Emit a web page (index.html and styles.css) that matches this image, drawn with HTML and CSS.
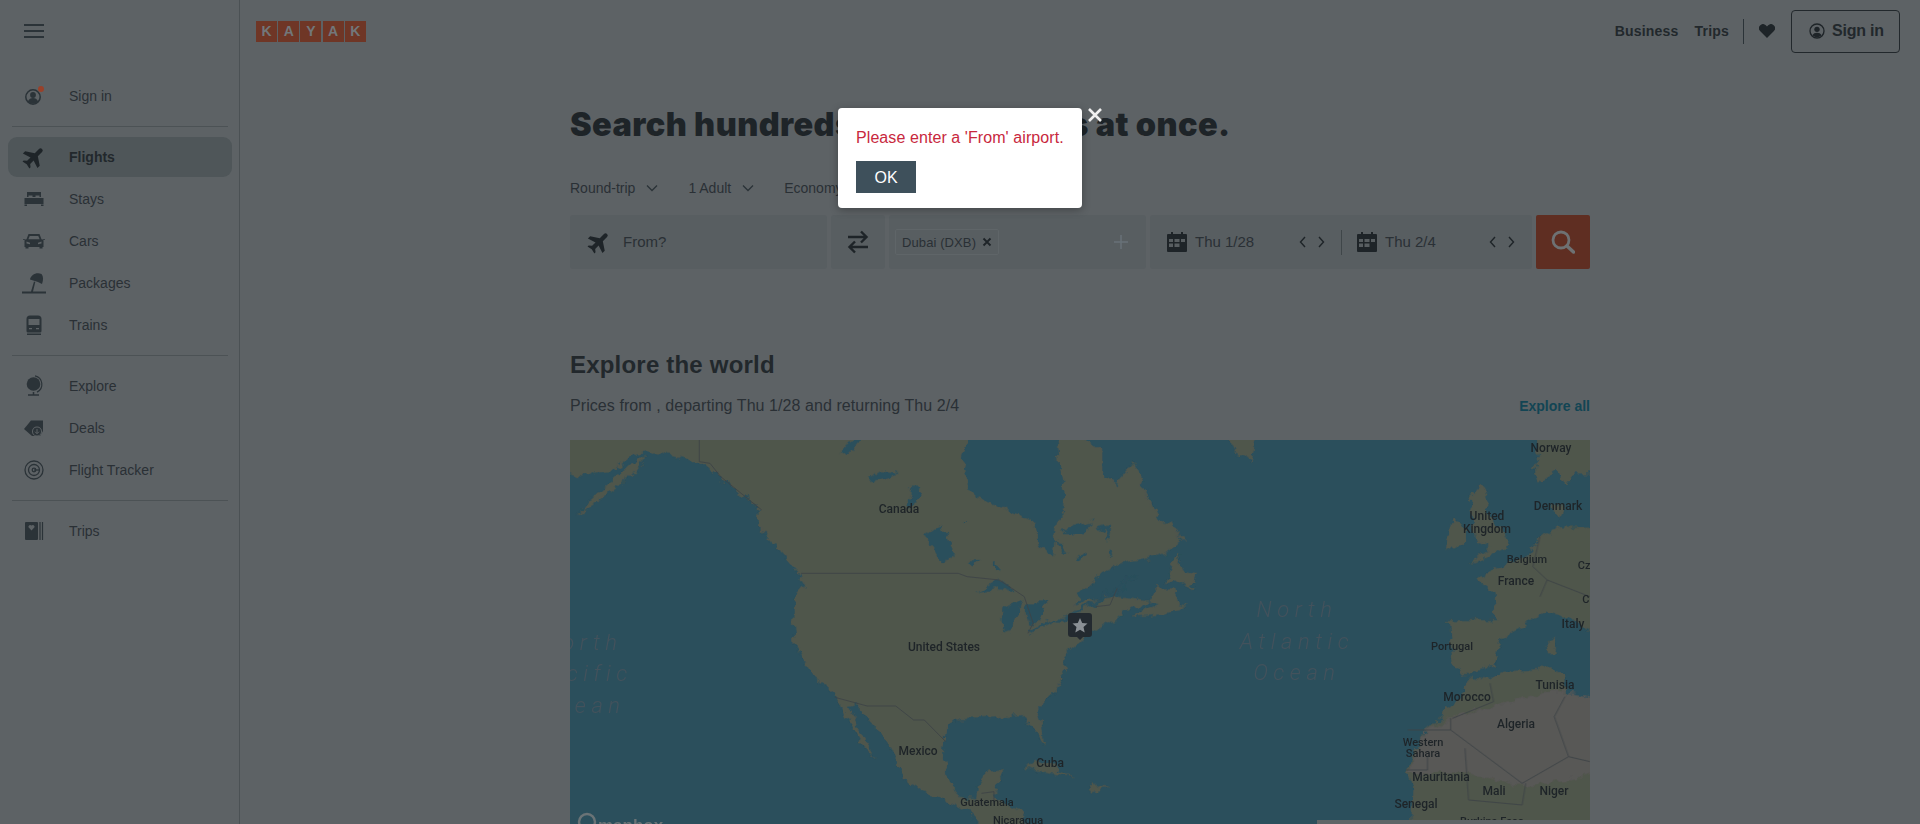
FILE: index.html
```html
<!DOCTYPE html>
<html lang="en">
<head>
    <meta charset="UTF-8">
    <meta name="viewport" content="width=device-width, initial-scale=1.0">
    <title>KAYAK - Search Flights</title>
    <link rel="stylesheet" href="styles.css">
</head>
<body>
    <aside class="sidebar">
        <div class="burger"><span></span><span></span><span></span></div>
        <nav class="side-nav">
            <a class="side-item">
                <span class="side-icon">
                    <svg class="icon-user" viewBox="0 0 24 24" width="24" height="24"><circle cx="11" cy="13" r="7.200" fill="none" stroke="#2b3338" stroke-width="1.500"/><circle cx="11" cy="11" r="2.900" fill="#2b3338"/><path d="M5.800 17.500c1-2.500 3-3.500 5.200-3.500s4.200 1 5.200 3.500c-1.400 1.500-3.200 2.300-5.200 2.300s-3.800-.8-5.200-2.300z" fill="#2b3338"/><circle cx="19" cy="5" r="3" fill="#98412a"/></svg>
                </span>
                Sign in
            </a>
            <div class="side-line"></div>
            <a class="side-item active">
                <span class="side-icon">
                    <svg viewBox="0 0 24 24" width="26" height="26"><path transform="rotate(45 12 12)" d="M21.500 17v-3L14 9V3.500a2 2 0 0 0-4 0V9l-7.500 5v3l7.500-2.500V19l-2.500 2v1.500l4.500-1 4.500 1V21L14 19v-4.500z" fill="#1e2428"/></svg>
                </span>
                Flights
            </a>
            <a class="side-item">
                <span class="side-icon">
                    <svg viewBox="0 0 24 24" width="24" height="24"><path d="M5 5h14v5h-1.500V8.500h-4V10h-3V8.500h-4V10H5zM2.500 11h19v6h-19zM2.500 17.500h2.500V19H2.500zM19 17.500h2.500V19H19z" fill="#2b3338"/></svg>
                </span>
                Stays
            </a>
            <a class="side-item">
                <span class="side-icon">
                    <svg viewBox="0 0 24 24" width="24" height="24"><path fill-rule="evenodd" d="M6.500 5h11l2 5.200 2 1V18h-1v1.500h-3V18H6.500v1.500h-3V18h-1v-6.800l2-1zM7.700 7l-1.300 3.300h11.200L16.300 7zM4.500 12.500v2l3.500.8v-1.500zM19.500 12.500l-3.500 1.300v1.500l3.500-.8z" fill="#2b3338"/><path d="M1 10h2.500v.8H1zM20.500 10H23v.8h-2.500z" fill="#2b3338"/></svg>
                </span>
                Cars
            </a>
            <a class="side-item">
                <span class="side-icon">
                    <svg viewBox="0 0 24 24" width="24" height="24"><path d="M0 20.500h24V22.500H0zM9 20.500l3-10 1.300.4-2.300 9.600zM8 8.500C9 4 14 1 19.500 3c2 2.500 2 6 .5 10l-4-2-1.500-.5z" fill="#2b3338"/></svg>
                </span>
                Packages
            </a>
            <a class="side-item">
                <span class="side-icon">
                    <svg viewBox="0 0 24 24" width="24" height="24"><path fill-rule="evenodd" d="M8 2.500h8a3.500 3.500 0 0 1 3.500 3.500v12a1.500 1.500 0 0 1-1.500 1.500H6A1.500 1.500 0 0 1 4.500 18V6A3.500 3.500 0 0 1 8 2.500zM6.500 6v6h11V6zM7 15v1.200h3V15zM14 15v1.200h3V15z" fill="#2b3338"/><path d="M5 20.500h14V22H5z" fill="#2b3338"/></svg>
                </span>
                Trains
            </a>
            <div class="side-line"></div>
            <a class="side-item">
                <span class="side-icon">
                    <svg viewBox="0 0 24 24" width="24" height="24"><circle cx="11.500" cy="10" r="6.800" fill="#2b3338"/><path d="M13 1.800a8.700 8.700 0 0 1 2 16.300" fill="none" stroke="#2b3338" stroke-width="1.200"/><path d="M11.500 18v2.500M6 21h11" fill="none" stroke="#2b3338" stroke-width="1.500"/></svg>
                </span>
                Explore
            </a>
            <a class="side-item">
                <span class="side-icon">
                    <svg viewBox="0 0 24 24" width="24" height="24"><path d="M9 4.500h12V15l-3 5H10l-8-7z" fill="#2b3338"/><circle cx="15" cy="15.500" r="5" fill="#5d6265"/><circle cx="15" cy="15.500" r="4" fill="#2b3338"/><path d="M15 13v4.500M13 15.700l2 2 2-2" fill="none" stroke="#5d6265" stroke-width="1"/></svg>
                </span>
                Deals
            </a>
            <a class="side-item">
                <span class="side-icon">
                    <svg viewBox="0 0 24 24" width="24" height="24" fill="none" stroke="#2b3338" stroke-width="1.300"><circle cx="12" cy="12" r="9"/><circle cx="12" cy="12" r="5.500"/><circle cx="12" cy="12" r="1.800"/><path d="M12 12h5"/></svg>
                </span>
                Flight Tracker
            </a>
            <div class="side-line"></div>
            <a class="side-item">
                <span class="side-icon">
                    <svg viewBox="0 0 24 24" width="24" height="24"><path fill-rule="evenodd" d="M4 3h11a1 1 0 0 1 1 1v16a1 1 0 0 1-1 1H4a1 1 0 0 1-1-1V4a1 1 0 0 1 1-1zM9.500 11.500l3-3.200a1.800 1.800 0 0 0-3-1.800 1.800 1.800 0 0 0-3 1.800z" fill="#2b3338"/><path d="M18 3v18M20.500 3v18" stroke="#2b3338" stroke-width="1.200"/></svg>
                </span>
                Trips
            </a>
        </nav>
    </aside>

    <main class="main">
        <header class="topbar">
            <div class="logo"><span>K</span><span>A</span><span>Y</span><span>A</span><span>K</span></div>
            <div class="top-links">
                <a>Business</a>
                <a class="trips-link">Trips</a>
                <span class="top-line"></span>
                <svg class="heart" viewBox="0 0 16 14" width="16" height="14"><path d="M8 14L1.300 7.300A3.900 3.900 0 0 1 6.800 1.300L8 2.500l1.200-1.200a3.900 3.900 0 0 1 5.500 6z" fill="#1e2428"/></svg>
                <button class="signin-btn">
                    <svg viewBox="0 0 24 24" width="16" height="16"><circle cx="12" cy="12" r="10.500" fill="none" stroke="#1e2428" stroke-width="2"/><circle cx="12" cy="9.500" r="4" fill="#1e2428"/><path d="M5 18.500c1.500-3 4-4 7-4s5.500 1 7 4c-2 2-4.300 3-7 3s-5-1-7-3z" fill="#1e2428"/></svg>
                    Sign in
                </button>
            </div>
        </header>

        <section class="content">
            <h1 class="title">Search hundreds of travel sites at once.</h1>

            <div class="filters">
                <a class="filter">Round-trip <svg viewBox="0 0 12 8" width="12" height="8"><path d="M1 1.500l5 5 5-5" fill="none" stroke="#2b3338" stroke-width="1.300"/></svg></a>
                <a class="filter">1 Adult <svg viewBox="0 0 12 8" width="12" height="8"><path d="M1 1.500l5 5 5-5" fill="none" stroke="#2b3338" stroke-width="1.300"/></svg></a>
                <a class="filter">Economy</a>
            </div>

            <div class="search-row">
                <div class="box origin">
                    <svg viewBox="0 0 24 24" width="26" height="26"><path transform="rotate(45 12 12)" d="M21.500 17v-3L14 9V3.500a2 2 0 0 0-4 0V9l-7.500 5v3l7.500-2.500V19l-2.500 2v1.500l4.500-1 4.500 1V21L14 19v-4.500z" fill="#1e2428"/></svg>
                    <span class="from-text">From?</span>
                </div>
                <div class="box swap">
                    <svg viewBox="0 0 22 24" width="22" height="24"><path d="M1 7h18M14 1.500L19.500 7 14 12.500M21 17H3M8 11.500L2.500 17 8 22.500" fill="none" stroke="#1e2428" stroke-width="2.400"/></svg>
                </div>
                <div class="box dest">
                    <div class="chip">Dubai (DXB) <svg viewBox="0 0 10 10" width="10" height="10"><path d="M1.500 1.500l7 7M8.500 1.500l-7 7" stroke="#1e2428" stroke-width="1.800"/></svg></div>
                    <svg class="plus" viewBox="0 0 14 14" width="14" height="14"><path d="M7 0v14M0 7h14" stroke="#687278" stroke-width="1.500"/></svg>
                </div>
                <div class="box dates">
                    <div class="date">
                        <svg viewBox="0 0 20 20" width="20" height="20"><path fill-rule="evenodd" d="M4 0h2v2h8V0h2v2h3a1 1 0 0 1 1 1v16a1 1 0 0 1-1 1H1a1 1 0 0 1-1-1V3a1 1 0 0 1 1-1h3zM2 7v3h4V7zM7.500 7v3h5V7zM14 7v3h4V7zM2 11.500V15h4v-3.500zM7.500 11.500V15h5v-3.500z" fill="#1e2428"/></svg>
                        <span class="date-text">Thu 1/28</span>
                        <svg class="arrows" viewBox="0 0 26 12" width="26" height="12"><path d="M6 1L1.500 6 6 11M20 1l4.500 5-4.500 5" fill="none" stroke="#1e2428" stroke-width="1.400"/></svg>
                    </div>
                    <span class="date-line"></span>
                    <div class="date">
                        <svg viewBox="0 0 20 20" width="20" height="20"><path fill-rule="evenodd" d="M4 0h2v2h8V0h2v2h3a1 1 0 0 1 1 1v16a1 1 0 0 1-1 1H1a1 1 0 0 1-1-1V3a1 1 0 0 1 1-1h3zM2 7v3h4V7zM7.500 7v3h5V7zM14 7v3h4V7zM2 11.500V15h4v-3.500zM7.500 11.500V15h5v-3.500z" fill="#1e2428"/></svg>
                        <span class="date-text">Thu 2/4</span>
                        <svg class="arrows" viewBox="0 0 26 12" width="26" height="12"><path d="M6 1L1.500 6 6 11M20 1l4.500 5-4.500 5" fill="none" stroke="#1e2428" stroke-width="1.400"/></svg>
                    </div>
                </div>
                <button class="search-btn">
                    <svg viewBox="0 0 24 24" width="24" height="24"><circle cx="10" cy="10" r="8" fill="none" stroke="#6e7173" stroke-width="2.800"/><path d="M16 16l6.500 6" stroke="#6e7173" stroke-width="3.500" stroke-linecap="round"/></svg>
                </button>
            </div>

            <h2 class="explore-title">Explore the world</h2>
            <div class="explore-sub">
                <span>Prices from , departing Thu 1/28 and returning Thu 2/4</span>
                <a class="explore-all">Explore all</a>
            </div>

            <div class="map">
                <svg viewBox="0 0 1020 384" width="1020" height="384">
                    <defs>
                        <filter id="rough" x="-5%" y="-5%" width="110%" height="110%">
                            <feTurbulence type="fractalNoise" baseFrequency=".035" numOctaves="3" seed="4" result="noise"/>
                            <feDisplacementMap in="SourceGraphic" in2="noise" scale="34" xChannelSelector="R" yChannelSelector="G"/>
                        </filter>
                    </defs>
                    <g transform="translate(-10 -100) scale(.35714 .33333)">
                        <g filter="url(#rough)">
                            <!-- north america -->
                            <polygon class="land" points="-20,250 -20,385 60,410 100,395 150,390 205,345 270,335 330,350 390,365 420,390 450,420 490,450 530,480 565,510 560,560 590,600 620,640 670,700 685,740 660,770 655,850 660,920 700,1000 770,1060 800,1130 850,1215 888,1258 850,1190 805,1095 830,1090 870,1140 920,1220 955,1290 965,1320 1040,1360 1100,1395 1150,1420 1210,1490 1300,1490 1300,1420 1260,1400 1215,1375 1225,1330 1250,1290 1200,1295 1170,1340 1165,1375 1115,1370 1085,1310 1075,1230 1085,1160 1120,1135 1210,1130 1300,1125 1325,1170 1355,1210 1350,1160 1335,1110 1390,1050 1420,990 1405,960 1440,920 1500,870 1568,830 1600,800 1640,800 1670,745 1720,745 1730,795 1760,800 1670,825 1590,830 1600,830 1680,790 1560,770 1434,790 1514,700 1574,670 1694,640 1744,600 1714,545 1684,545 1634,440 1604,370 1559,430 1524,410 1524,340 1474,300 1474,250"/>
                            <polygon class="land" points="50,525 100,490 160,440 205,400 240,350 200,370 150,420 85,480"/>
                            <polygon class="land" points="1694,735 1729,640 1744,690 1784,700 1774,735 1759,750 1744,720"/>
                            <polygon class="land" points="1854,250 1959,250 1934,365 1894,340"/>
                            <polygon class="land" points="1295,1280 1340,1260 1400,1290 1445,1310 1395,1300"/>
                            <polygon class="land" points="1480,1330 1540,1340 1490,1352"/>
                            <!-- hudson bay and lakes -->
                            <polygon class="water" points="1150,250 1390,250 1400,380 1420,470 1390,560 1380,640 1340,620 1320,540 1250,510 1160,470 1125,390"/>
                            <polygon class="water" points="780,345 830,270 860,270 810,340"/>
                            <polygon class="water" points="870,415 900,390 950,400 880,420"/>
                            <polygon class="water" points="1025,585 1070,550 1100,650 1070,670"/>
                            <polygon class="water" points="985,440 1015,440 1000,480 970,500"/>
                            <polygon class="water" points="1170,760 1230,715 1285,760 1230,745"/>
                            <polygon class="water" points="1235,810 1295,775 1265,875 1238,880"/>
                            <polygon class="water" points="1300,790 1362,790 1350,830 1315,860"/>
                            <polygon class="water" points="1400,570 1490,545 1470,580 1410,580"/>
                            <polygon class="water" points="1130,545 1145,540 1125,555"/>
                            <polygon class="water" points="1150,660 1175,660 1160,680"/>
                            <polygon class="water" points="1215,670 1232,670 1230,695 1215,690"/>
                            <path class="river" d="M1310,880 L1360,850 L1430,825 L1530,770 L1610,710"/>
                            <path class="river" d="M1510,570 L1540,560 L1530,600"/>
                            <path class="river" d="M1390,600 L1420,640 M1450,660 L1470,640 M1540,630 L1545,650"/>
                            <!-- europe and africa, same crop shifted right -->
                            <g transform="translate(1344 0)">
                                <polygon class="land" points="1375,250 1590,250 1590,400 1500,400 1470,440 1450,390 1390,430 1380,400 1400,350"/>
                                <polygon class="land" points="1430,490 1470,500 1450,540"/>
                                <polygon class="land" points="1200,470 1240,425 1255,480 1240,510 1290,560 1315,620 1230,660 1205,670 1260,620 1220,600 1210,540"/>
                                <polygon class="land" points="1130,620 1160,540 1190,560 1190,610 1150,630"/>
                                <polygon class="land" points="1590,560 1470,560 1400,590 1360,650 1270,690 1220,715 1270,760 1275,840 1145,840 1155,975 1195,1000 1270,975 1290,900 1340,865 1410,815 1470,830 1590,900"/>
                                <polygon class="land" points="1420,900 1445,890 1440,940 1425,940"/>
                                <polygon class="land" points="1200,1010 1170,1080 1135,1100 1130,1130 1080,1170 1025,1290 1040,1350 1035,1490 1590,1490 1590,1080 1475,1065 1470,1000 1425,985 1300,995 1260,1020"/>
                                <polygon class="desert" points="1150,1135 1270,1095 1440,1050 1590,1080 1590,1300 1360,1340 1200,1300 1030,1300 1080,1170"/>
                            </g>
                        </g>
                        <g transform="translate(1344 0)">
                            <path class="border" d="M1150,1170 V1135 M1150,1170 L1030,1170 M1150,1170 L1350,1330 L1480,1250 L1540,1265 M1190,1225 L1200,1380 L1350,1395 L1360,1330 M1085,1250 L1085,1290 L1025,1290 M1470,1070 L1440,1130 L1480,1250 M1260,1030 L1270,1085 L1155,1135"/>
                            <path class="border" d="M1400,590 L1380,680 L1420,720 L1400,770 M1420,720 L1540,770"/>
                        </g>
                        <path class="border" d="M390,300 L390,365 L420,370 L450,410 L530,480 L565,510 M675,700 H1115 L1140,710 L1230,720 L1300,770 L1325,850 L1310,880 M770,1072 L860,1098 H940 L990,1140 H1020 L1080,1205 M1180,1360 L1215,1355 L1215,1390 M1500,800 L1540,795 L1560,745"/>
                    </g>

                    <text class="pl" x="329" y="73">Canada</text>
                    <text class="pl" x="374" y="211">United States</text>
                    <text class="pl" x="348" y="315">Mexico</text>
                    <text class="pl" x="480" y="327">Cuba</text>
                    <text class="pl small" x="417" y="366">Guatemala</text>
                    <text class="pl small" x="448" y="384">Nicaragua</text>
                    <text class="pl" x="981" y="12">Norway</text>
                    <text class="pl" x="917" y="80">United</text>
                    <text class="pl" x="917" y="93">Kingdom</text>
                    <text class="pl" x="988" y="70">Denmark</text>
                    <text class="pl small" x="957" y="123">Belgium</text>
                    <text class="pl small" x="1023" y="129">Czech</text>
                    <text class="pl" x="946" y="145">France</text>
                    <text class="pl small" x="1030" y="163">Croatia</text>
                    <text class="pl" x="1003" y="188">Italy</text>
                    <text class="pl small" x="882" y="210">Portugal</text>
                    <text class="pl" x="985" y="249">Tunisia</text>
                    <text class="pl" x="897" y="261">Morocco</text>
                    <text class="pl" x="946" y="288">Algeria</text>
                    <text class="pl small" x="853" y="306">Western</text>
                    <text class="pl small" x="853" y="317">Sahara</text>
                    <text class="pl" x="871" y="341">Mauritania</text>
                    <text class="pl" x="924" y="355">Mali</text>
                    <text class="pl" x="984" y="355">Niger</text>
                    <text class="pl" x="846" y="368">Senegal</text>
                    <text class="pl small" x="922" y="385">Burkina Faso</text>

                    <text class="ocean" x="727" y="177">North</text>
                    <text class="ocean" x="727" y="209">Atlantic</text>
                    <text class="ocean" x="727" y="240">Ocean</text>
                    <text class="ocean" x="12" y="210">North</text>
                    <text class="ocean" x="12" y="241">Pacific</text>
                    <text class="ocean" x="12" y="273">Ocean</text>

                    <rect class="attrib" x="747" y="380" width="273" height="4"/>
                    <circle class="mb-logo" cx="17" cy="382" r="8"/>
                    <text class="mb-text" x="28" y="391">mapbox</text>

                    <!-- home airport pin -->
                    <path class="pin" d="M501 173h18a3 3 0 0 1 3 3v18a3 3 0 0 1-3 3h-6l-3 3-3-3h-6a3 3 0 0 1-3-3v-18a3 3 0 0 1 3-3z"/>
                    <polygon class="pin-star" points="510,178 512.200,183 517.500,183.500 513.500,187 514.700,192.500 510,189.700 505.300,192.500 506.500,187 502.500,183.500 507.800,183"/>
                </svg>
            </div>

            <div class="modal">
                <svg class="modal-close" viewBox="0 0 14 14" width="14" height="14"><path d="M1 1l12 12M13 1L1 13" stroke="#f0f0f0" stroke-width="2.600"/></svg>
                <p class="modal-text">Please enter a 'From' airport.</p>
                <button class="modal-ok">OK</button>
            </div>
        </section>
    </main>
</body>
</html>
```

FILE: styles.css
```css
body {
    font-family: 'Liberation Sans', Arial, sans-serif;
    background-color: #5d6265;
    color: #262c30;
    display: flex;
    height: 824px;
    margin: 0;
    overflow: hidden;
}

.sidebar {
    width: 240px;
    flex-shrink: 0;
    box-sizing: border-box;
    border-right: 1px solid #4b5154;
}

.burger {
    height: 62px;
    padding-left: 24px;
    padding-top: 24px;
    box-sizing: border-box;
}

.burger span {
    display: block;
    width: 20px;
    height: 2px;
    margin-bottom: 4px;
    background-color: #2b3338;
}

.side-nav {
    padding-top: 13px;
}

.side-item {
    display: flex;
    align-items: center;
    height: 42px;
    font-size: 14px;
    color: #2a3035;
}

.side-icon {
    width: 69px;
    display: flex;
    justify-content: center;
    box-sizing: border-box;
    padding-right: 1px;
}

.side-item.active {
    position: relative;
    z-index: 0;
    font-weight: bold;
    color: #22282c;
}

.side-item.active::before {
    content: '';
    position: absolute;
    z-index: -1;
    left: 8px;
    right: 7px;
    top: 1px;
    bottom: 1px;
    border-radius: 9px;
    background-color: #4f5659;
}

.side-line {
    height: 1px;
    margin: 9px 11px 9px 12px;
    background-color: #4c5255;
}

.main {
    flex: 1;
    min-width: 0;
}

.topbar {
    height: 62px;
    display: flex;
    align-items: center;
    justify-content: space-between;
    padding: 0 20px 0 16px;
}

.logo {
    display: flex;
    gap: 1px;
}

.logo span {
    width: 21px;
    height: 21px;
    background-color: #6f3626;
    color: #72777a;
    font-size: 14px;
    font-weight: bold;
    line-height: 21px;
    text-align: center;
}

.logo span:not(:last-child) {
    margin-right: .2px;
}

.top-links {
    display: flex;
    align-items: center;
    font-size: 14px;
    font-weight: bold;
    color: #22282c;
}

.top-links a {
    margin-right: 16px;
    letter-spacing: .2px;
}

.top-links a.trips-link {
    margin-right: 14px;
}

.top-line {
    width: 1px;
    height: 25px;
    background-color: #2b3338;
    margin-right: 15px;
}

.heart {
    margin-right: 16px;
}

.signin-btn {
    display: flex;
    align-items: center;
    gap: 7px;
    width: 109px;
    height: 43px;
    padding: 0 0 0 17px;
    box-sizing: border-box;
    background: none;
    border: 1px solid #22282c;
    border-radius: 4px;
    font-family: inherit;
    font-size: 16px;
    font-weight: bold;
    letter-spacing: -.2px;
    color: #22282c;
}

.content {
    position: relative;
    width: 1020px;
    margin: 0 auto;
}

.title {
    margin: 0;
    height: 40px;
    padding-top: 43px;
    font-family: Inter, sans-serif;
    font-size: 32.500px;
    font-weight: 900;
    line-height: 40px;
    letter-spacing: .4px;
    white-space: nowrap;
    color: #1e2428;
}

.filters {
    display: flex;
    height: 20px;
    margin-top: 33px;
    font-size: 14px;
    line-height: 20px;
    color: #2a3035;
}

.filter {
    display: flex;
    align-items: center;
    gap: 11px;
    margin-right: 30px;
}

.search-row {
    display: flex;
    gap: 4px;
    height: 54px;
    margin-top: 17px;
}

.box {
    display: flex;
    align-items: center;
    background-color: #585e61;
    border-radius: 3px;
}

.origin {
    width: 257px;
    padding-left: 16px;
    box-sizing: border-box;
}

.from-text {
    margin-left: 11px;
    margin-bottom: 1px;
    font-size: 15px;
    color: #2a3035;
}

.swap {
    width: 54px;
    justify-content: center;
}

.dest {
    width: 257px;
    padding: 0 18px 0 6px;
    box-sizing: border-box;
    justify-content: space-between;
}

.chip {
    display: flex;
    align-items: center;
    gap: 6px;
    width: 104px;
    height: 26px;
    padding-left: 6px;
    box-sizing: border-box;
    border: 1px solid #5f6568;
    border-radius: 2px;
    font-size: 13px;
    letter-spacing: .1px;
    color: #2a3035;
}

.dates {
    width: 382px;
    padding-left: 17px;
    box-sizing: border-box;
}

.date {
    display: flex;
    align-items: center;
    width: 174px;
}

.date-text {
    flex: 1;
    margin-left: 8px;
    margin-bottom: 1px;
    font-size: 15px;
    color: #2a3035;
}

.arrows {
    margin-right: 16px;
}

.date-line {
    width: 1px;
    height: 25px;
    margin-right: 15px;
    background-color: #3f4649;
}

.search-btn {
    width: 54px;
    padding: 0;
    display: flex;
    align-items: center;
    justify-content: center;
    background-color: #5f2e22;
    border: none;
    border-radius: 2px;
}

.explore-title {
    margin: 81px 0 0;
    font-size: 24px;
    line-height: 30px;
    letter-spacing: .2px;
    color: #22282c;
}

.explore-sub {
    display: flex;
    justify-content: space-between;
    align-items: center;
    margin-top: 14px;
    height: 24px;
    font-size: 16px;
    letter-spacing: .07px;
    color: #2a3035;
}

.explore-all {
    font-size: 14px;
    font-weight: bold;
    letter-spacing: 0;
    color: #124554;
}

.map {
    margin-top: 22px;
    height: 384px;
    background-color: #2b4f5c;
    overflow: hidden;
}

.map svg {
    display: block;
}

.land {
    fill: #50564c;
}

.water {
    fill: #2b4f5c;
}

.desert {
    fill: #585856;
}

.river {
    fill: none;
    stroke: #2b4f5c;
    stroke-width: 9;
}

.border {
    fill: none;
    stroke: #3e4447;
    stroke-width: 2.500;
}

.pl {
    font-family: Roboto, sans-serif;
    font-size: 12px;
    font-weight: 500;
    text-anchor: middle;
    fill: #1e2428;
}

.pl.small {
    font-size: 11px;
}

.ocean {
    font-family: Roboto, sans-serif;
    font-size: 22px;
    font-weight: 300;
    font-style: italic;
    letter-spacing: 5.500px;
    text-anchor: middle;
    fill: #43525c;
}

.attrib {
    fill: #5f6567;
}

.mb-logo {
    fill: #2b4f5c;
    stroke: #6a7376;
    stroke-width: 2.500;
}

.mb-text {
    font-family: 'Liberation Sans', sans-serif;
    font-size: 17px;
    font-weight: bold;
    fill: #6a7376;
}

.pin {
    fill: #232a30;
}

.pin-star {
    fill: #8a9095;
}

.modal {
    position: absolute;
    left: 268px;
    top: 46px;
    width: 244px;
    height: 100px;
    padding: 15px 0 0 18px;
    box-sizing: border-box;
    background-color: #fff;
    border-radius: 4px;
    box-shadow: 0 2px 8px rgba(0, 0, 0, .3);
}

.modal-close {
    position: absolute;
    left: 250px;
    top: 0;
}

.modal-text {
    margin: 5px 0 0;
    font-size: 16px;
    line-height: 20px;
    letter-spacing: .08px;
    color: #c8283d;
}

.modal-ok {
    display: block;
    width: 60px;
    height: 32px;
    margin-top: 13px;
    padding: 2px 0 0;
    border: none;
    background-color: #3e505b;
    color: #fff;
    font-family: inherit;
    font-size: 16px;
}
```
